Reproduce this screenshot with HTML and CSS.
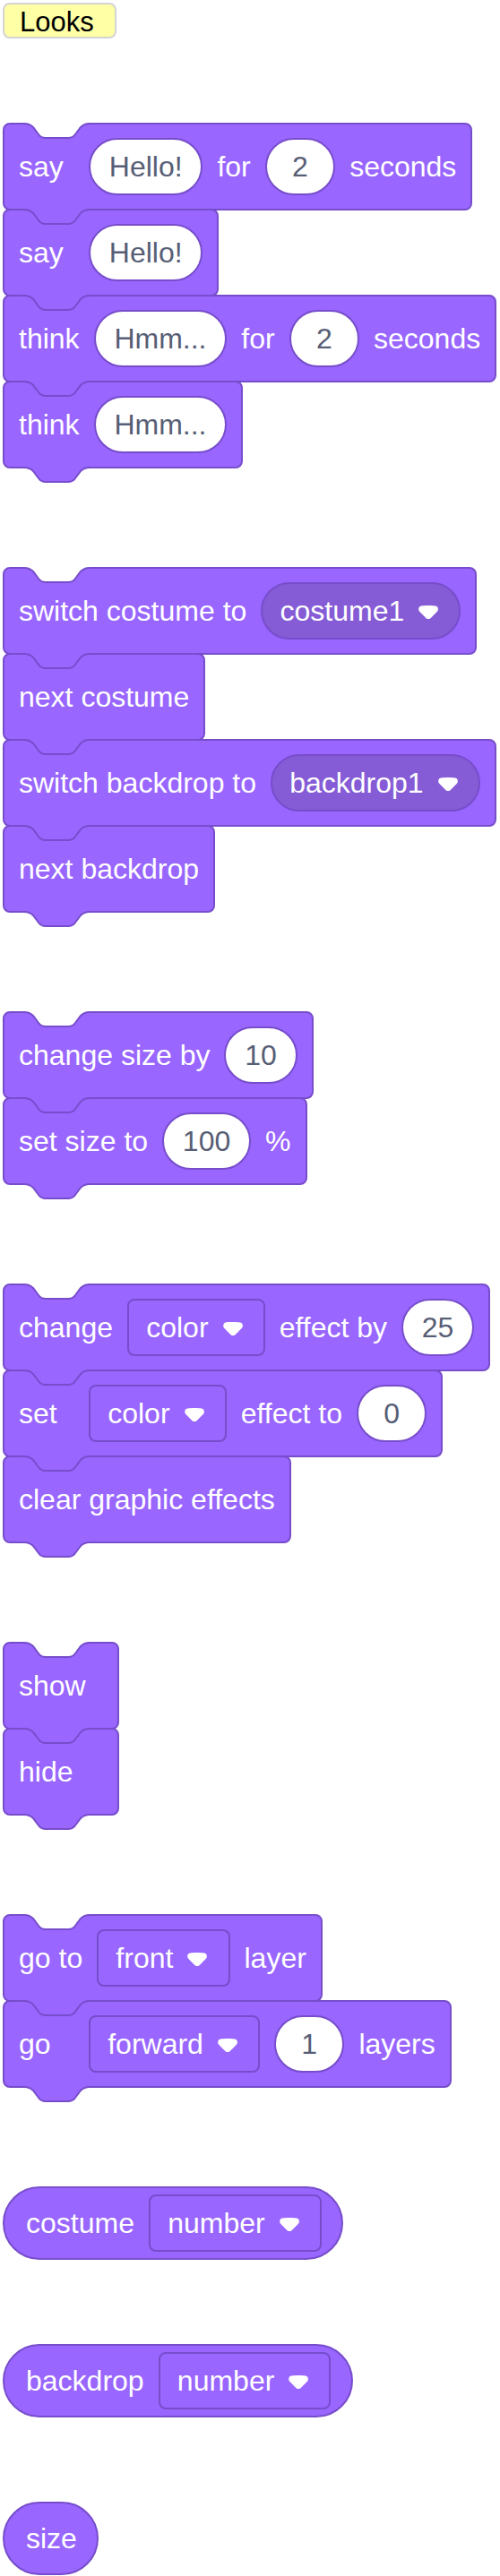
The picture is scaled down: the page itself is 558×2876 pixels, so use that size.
FILE: index.html
```html
<!DOCTYPE html>
<html>
<head>
	<title>Looks blocks</title>
	<link rel="stylesheet" href="styles.css">
</head>
<body>
	<svg class="defs" width="0" height="0">
		<symbol id="joint" viewBox="0 0 100 22">
			<path fill="currentColor" d="M24 3C30 3 32 5 34 7L40 15C42 18 44 19 48 19H73C77 19 79 18 81 15L87 7C89 5 91 3 97 3V0H24Z"/>
			<path fill="none" stroke="#774dcb" stroke-width="2" d="M24 3C30 3 32 5 34 7L40 15C42 18 44 19 48 19H73C77 19 79 18 81 15L87 7C89 5 91 3 97 3"/>
		</symbol>
		<symbol id="arrow" viewBox="0 0 12.71 8.79">
			<path fill="#fff" d="M12.71 2.44A2.41 2.41 0 0 1 12 4.16L8.08 8.08a2.45 2.45 0 0 1-3.45 0L.72 4.16A2.42 2.42 0 0 1 0 2.44 2.48 2.48 0 0 1 .71.71C1 .47 1.43 0 6.36 0S11.75.46 12 .71a2.44 2.44 0 0 1 .71 1.73z"/>
		</symbol>
	</svg>

	<div class="palette">
		<div class="category">Looks</div>

		<div class="stack">
			<div class="block">
				<span class="label short">say</span>
				<span class="input">Hello!</span>
				<span class="label">for</span>
				<span class="input">2</span>
				<span class="label">seconds</span>
				<svg class="notch"><use href="#joint"/></svg>
				<svg class="tab"><use href="#joint"/></svg>
			</div>
			<div class="block">
				<span class="label short">say</span>
				<span class="input">Hello!</span>
				<svg class="notch"><use href="#joint"/></svg>
				<svg class="tab"><use href="#joint"/></svg>
			</div>
			<div class="block">
				<span class="label">think</span>
				<span class="input">Hmm...</span>
				<span class="label">for</span>
				<span class="input">2</span>
				<span class="label">seconds</span>
				<svg class="notch"><use href="#joint"/></svg>
				<svg class="tab"><use href="#joint"/></svg>
			</div>
			<div class="block">
				<span class="label">think</span>
				<span class="input">Hmm...</span>
				<svg class="notch"><use href="#joint"/></svg>
				<svg class="tab"><use href="#joint"/></svg>
			</div>
		</div>

		<div class="stack">
			<div class="block">
				<span class="label">switch costume to</span>
				<span class="menu round">costume1<svg class="arrow"><use href="#arrow"/></svg></span>
				<svg class="notch"><use href="#joint"/></svg>
				<svg class="tab"><use href="#joint"/></svg>
			</div>
			<div class="block">
				<span class="label">next costume</span>
				<svg class="notch"><use href="#joint"/></svg>
				<svg class="tab"><use href="#joint"/></svg>
			</div>
			<div class="block">
				<span class="label">switch backdrop to</span>
				<span class="menu round">backdrop1<svg class="arrow"><use href="#arrow"/></svg></span>
				<svg class="notch"><use href="#joint"/></svg>
				<svg class="tab"><use href="#joint"/></svg>
			</div>
			<div class="block">
				<span class="label">next backdrop</span>
				<svg class="notch"><use href="#joint"/></svg>
				<svg class="tab"><use href="#joint"/></svg>
			</div>
		</div>

		<div class="stack">
			<div class="block">
				<span class="label">change size by</span>
				<span class="input">10</span>
				<svg class="notch"><use href="#joint"/></svg>
				<svg class="tab"><use href="#joint"/></svg>
			</div>
			<div class="block">
				<span class="label">set size to</span>
				<span class="input">100</span>
				<span class="label">%</span>
				<svg class="notch"><use href="#joint"/></svg>
				<svg class="tab"><use href="#joint"/></svg>
			</div>
		</div>

		<div class="stack">
			<div class="block">
				<span class="label">change</span>
				<span class="menu">color<svg class="arrow"><use href="#arrow"/></svg></span>
				<span class="label">effect by</span>
				<span class="input">25</span>
				<svg class="notch"><use href="#joint"/></svg>
				<svg class="tab"><use href="#joint"/></svg>
			</div>
			<div class="block">
				<span class="label short">set</span>
				<span class="menu">color<svg class="arrow"><use href="#arrow"/></svg></span>
				<span class="label">effect to</span>
				<span class="input">0</span>
				<svg class="notch"><use href="#joint"/></svg>
				<svg class="tab"><use href="#joint"/></svg>
			</div>
			<div class="block">
				<span class="label">clear graphic effects</span>
				<svg class="notch"><use href="#joint"/></svg>
				<svg class="tab"><use href="#joint"/></svg>
			</div>
		</div>

		<div class="stack">
			<div class="block">
				<span class="label">show</span>
				<svg class="notch"><use href="#joint"/></svg>
				<svg class="tab"><use href="#joint"/></svg>
			</div>
			<div class="block">
				<span class="label">hide</span>
				<svg class="notch"><use href="#joint"/></svg>
				<svg class="tab"><use href="#joint"/></svg>
			</div>
		</div>

		<div class="stack">
			<div class="block">
				<span class="label">go to</span>
				<span class="menu">front<svg class="arrow"><use href="#arrow"/></svg></span>
				<span class="label">layer</span>
				<svg class="notch"><use href="#joint"/></svg>
				<svg class="tab"><use href="#joint"/></svg>
			</div>
			<div class="block">
				<span class="label short">go</span>
				<span class="menu">forward<svg class="arrow"><use href="#arrow"/></svg></span>
				<span class="input">1</span>
				<span class="label">layers</span>
				<svg class="notch"><use href="#joint"/></svg>
				<svg class="tab"><use href="#joint"/></svg>
			</div>
		</div>

		<div class="reporter">
			<span class="label">costume</span>
			<span class="menu">number<svg class="arrow"><use href="#arrow"/></svg></span>
		</div>

		<div class="reporter">
			<span class="label">backdrop</span>
			<span class="menu">number<svg class="arrow"><use href="#arrow"/></svg></span>
		</div>

		<div class="reporter">
			<span class="label">size</span>
		</div>
	</div>
</body>
</html>
```

FILE: styles.css
```css
body {
	margin: 0;
	background-color: #fff;
	font-family: "Liberation Sans", Arial, sans-serif;
}
.defs {
	position: absolute;
	width: 0;
	height: 0;
}
.palette {
	display: flex;
	flex-direction: column;
	align-items: flex-start;
	gap: 94px;
	padding: 3px;
}
.category {
	width: 127px;
	height: 40px;
	box-sizing: border-box;
	padding: 3px 0 0 17px;
	background-color: #ffffa5;
	border: 2px solid #d4d4d4;
	border-radius: 8px;
	font-size: 31px;
	line-height: 34px;
	color: #000;
}
.stack {
	display: flex;
	flex-direction: column;
	align-items: flex-start;
	padding-bottom: 16px;
	font-size: 32px;
}
.block {
	position: relative;
	display: flex;
	align-items: center;
	gap: 0.5em;
	min-width: 130px;
	height: 98px;
	box-sizing: border-box;
	padding: 0 0.5em;
	background-color: #9966ff;
	border: 2px solid #774dcb;
	border-radius: 8px;
	color: #fff;
	white-space: nowrap;
}
.block + .block {
	margin-top: -2px;
}
.notch, .tab {
	position: absolute;
	left: -2px;
	width: 100px;
	height: 22px;
	overflow: visible;
	color: #9966ff;
}
.notch {
	top: -4px;
}
.block:first-child .notch {
	color: #fff;
}
.tab {
	top: calc(100% - 2px);
}
.label {
	white-space: nowrap;
}
.short {
	min-width: calc(2em - 2px);
}
.input {
	display: inline-flex;
	align-items: center;
	justify-content: center;
	height: 64px;
	min-width: 2.45em;
	box-sizing: border-box;
	padding: 0 0.65em;
	background-color: #fff;
	border: 2px solid #774dcb;
	border-radius: 32px;
	color: #575e75;
}
.menu {
	display: inline-flex;
	align-items: center;
	gap: 0.5em;
	height: 64px;
	box-sizing: border-box;
	padding: 0 0.72em 0 0.6em;
	background-color: #9966ff;
	border: 2px solid #774dcb;
	border-radius: 8px;
	color: #fff;
}
.menu.round {
	background-color: #855cd6;
	border-radius: 32px;
}
.arrow {
	width: 0.69em;
	height: 0.47em;
	margin-top: 4px;
}
.reporter {
	display: flex;
	align-items: center;
	gap: 0.5em;
	height: 82px;
	box-sizing: border-box;
	padding: 0 0.7em 0 0.75em;
	background-color: #9966ff;
	border: 2px solid #774dcb;
	border-radius: 41px;
	color: #fff;
	font-size: 32px;
	white-space: nowrap;
}
```
